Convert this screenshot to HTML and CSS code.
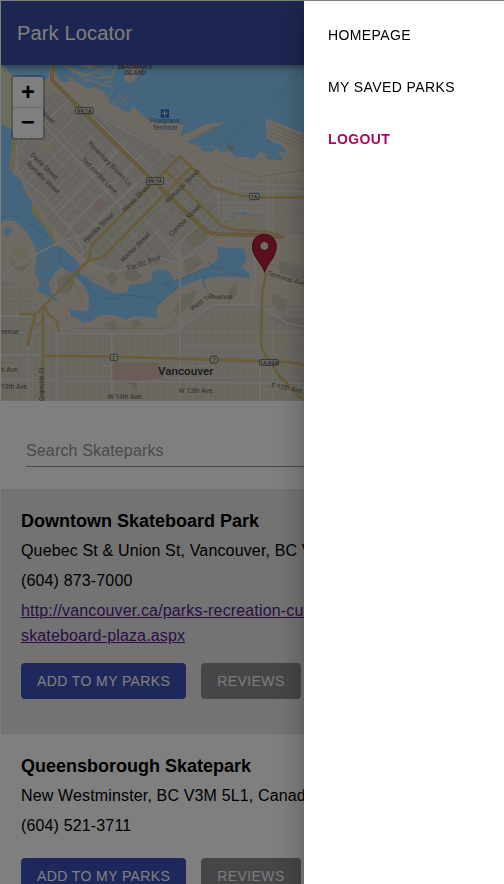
FILE: index.html
```html
<!DOCTYPE html>
<html lang="en">
<head>
<meta charset="utf-8">
<meta name="viewport" content="width=device-width, initial-scale=1">
<title>Park Locator</title>
<link rel="stylesheet" href="styles.css">
</head>
<body>
<div class="app">
  <header class="app-bar"><h1>Park Locator</h1></header>
  <section class="map" aria-label="Map of Vancouver">
    <svg class="map-canvas" viewBox="3 15 1509 1008" preserveAspectRatio="xMinYMin slice">
      <defs>
        <pattern id="blocks" width="48" height="34" patternUnits="userSpaceOnUse">
          <rect width="48" height="34" fill="#d7d1c5"/>
          <path d="M4 4h9v9H4zM17 5h12v7H17zM33 4h11v10H33zM4 20h14v9H4zM22 21h8v9h-8zM34 20h10v8H34z" fill="#d1cbbf"/>
          <path d="M0 0H48M0 0V34" stroke="#dfdbd5" stroke-width="3"/>
          <path d="M0 17H48" stroke="#ccc7bd" stroke-width="1"/>
        </pattern>
        <pattern id="downtown" width="60" height="38" patternUnits="userSpaceOnUse" patternTransform="translate(265 560) rotate(-45)">
          <rect width="60" height="38" fill="#d4cfc4"/>
          <path d="M4 4h12v11H4zM20 4h9v9h-9zM33 5h20v8H33zM4 22h18v11H4zM27 23h10v10H27zM41 22h14v11H41z" fill="#cdc7bc"/>
          <path d="M0 19H60" stroke="#c5c0b8" stroke-width="1"/>
          <path d="M0 0H60M0 0V38" stroke="#dfdcda" stroke-width="3"/>
        </pattern>
      </defs>
      <rect x="3" y="15" width="1509" height="1008" fill="#dcd5c7"/>
      <path d="M3 15L38 48V212L3 192Z" fill="#d9dbc2"/>
      <path d="M150 90L400 215L540 290L640 370L660 470L730 505L850 525L650 530L550 600L350 640L240 590L150 490L55 340L45 280L55 200Z" fill="url(#downtown)"/>
      <path d="M640 340L700 360H912V525H800L690 500L650 450Z" fill="url(#blocks)"/>
      <path d="M3 769H110L175 820H515L540 810L635 736H1512V1023H3Z" fill="url(#blocks)"/>
      <path d="M3 660L90 680L105 720L130 765H3Z" fill="url(#blocks)"/>
      <!-- English Bay and False Creek -->
      <path d="M3 192L20 200L38 212L40 240L35 280L28 325L42 345L60 355L68 375L82 405L95 425L98 460L112 475L135 500L150 530L162 545L166 562L185 562L205 580L225 598L238 615L240 640L262 650L275 668L300 675L320 690L345 700L380 697L390 675L430 670L455 660L455 642L475 628L500 630L515 645L520 665L550 650L600 630L615 626L640 610L652 600V560L735 567L740 600L725 620L748 640L750 655L700 650L650 650L614 658L618 680L624 700L611 680L605 655L560 672L530 690L505 705L485 725L472 740L470 775L430 770L400 768L380 780L345 765L300 765L275 783L250 788L235 775L215 770L205 745L225 750L262 755L268 735L265 700L240 662L215 640L185 620L165 640L145 670L152 695L182 733L155 715L135 705L110 690L120 670L105 640L108 600L112 585L105 560L90 530L70 505L45 485L15 478L3 490Z" fill="#88cbf7"/>
      <path d="M10 510L22 501L40 510L26 527L13 527ZM695 470L706 466L700 477ZM705 462L747 454L738 463Z" fill="#88cbf7"/>
      <!-- Burrard Inlet and Lost Lagoon -->
      <path d="M160 15L165 40L185 65L200 67L215 62L200 45L215 55L260 85L285 82L310 95L330 130L385 160L400 140L445 180L480 190L530 190L552 195L540 230L625 190L675 186L605 225L560 247L590 255L610 275L640 275L650 262L660 275L690 275L705 290L750 292L760 300L780 275L795 280L800 298L850 300L835 275L860 278L850 262L800 235L797 175L912 220L1512 420V15ZM10 15H150L145 55L130 60L38 48Z" fill="#88cbf7"/>
      <path d="M370 15H425L418 38L405 60L385 70L372 60L378 40ZM240 15L275 30L285 15Z" fill="#dcd5c7"/>
      <g fill="none" stroke="#d2d0c5" stroke-width="5">
        <path d="M190 15L240 38L290 55L335 50L350 15M205 28L250 48L330 20M250 55L310 72L340 60M285 20L315 55M300 75L340 78"/>
        <path d="M195 50L260 82M215 47L230 38M235 57L249 46M250 69L266 56M310 95L345 132L370 104M320 119L342 87M336 132L360 99M350 142L382 109M365 152L392 120M602 262H645M670 280L675 255M685 280L690 260" stroke-width="4" stroke-dasharray="9 3"/>
      </g>
      <path d="M685 256L704 263L700 272L682 265Z" fill="#a8aaa6"/>
      <!-- beaches -->
      <path d="M36 235L52 230L47 310L40 334L28 328L35 280ZM95 430L108 433L118 465L135 490L153 505L163 535L166 562L150 530L135 500L112 475L98 460Z" fill="#d6ca92"/>
      <!-- marina docks -->
      <g fill="none" stroke="#b0cbd5" stroke-width="2">
        <path d="M108 590L155 570M106 600L158 580M108 610L162 590M105 620L165 600M107 632L168 610M108 644L165 622M114 656L155 640M115 668L148 653M120 680L149 665M130 692L152 684M150 565V590M140 568V592M460 660L488 688M462 646L493 674M468 637L500 667M478 632L506 660M440 730L468 740M435 738L470 748M438 750L470 758M215 750L232 770M240 755L247 780"/>
      </g>
      <!-- ferry and seawall routes -->
      <path d="M912 15L840 105L770 165L700 230L645 260M3 471Q40 460 76 485T160 540L178 570L180 610L205 640L240 650L275 695L315 715L355 715L365 703L410 708L472 715L475 730L527 687L490 670L550 655L612 625L630 605L634 624L660 620L690 640L735 650" fill="none" stroke="#629ac0" stroke-width="2" stroke-dasharray="5 4"/>
      <!-- parks and special areas -->
      <path d="M38 570L75 555L90 595L55 610ZM120 255L140 243L160 268L138 282ZM375 795L430 790L440 810L370 812ZM635 837H678V858H635ZM823 820H858V850H823ZM697 490Q725 458 758 478V504L700 505Z" fill="#d0d2b2"/>
      <circle cx="590" cy="533" r="30" fill="#c5c5aa"/>
      <path d="M272 430L295 412L322 434L293 458ZM335 908H480L490 955L415 960L410 992L385 970L335 960Z" fill="#d2b9b2"/>
      <g fill="#c9c3b7"><path d="M315 650L342 632L352 662L334 682ZM368 640L405 625L428 648L405 665L380 660ZM170 660L202 640L226 665L205 705L175 692ZM545 705L592 690L580 725L535 765L520 750ZM685 690L710 660V705L685 727ZM820 700L865 722L850 760L812 730ZM798 770L850 795L912 810V775ZM835 600L912 630V665L840 640ZM310 790L345 780L355 808L330 812ZM390 785L410 776L425 793L405 804ZM550 600L590 585L610 610L560 645ZM30 590L55 620L90 610L70 635L38 625Z"/></g>
      <g fill="none" stroke="#c3beb4" stroke-width="3">
        <path d="M810 190L912 235M805 202L912 247M803 214L912 259M805 226L912 271M855 206V238M570 240L650 198M250 635L290 660M660 310L780 350L912 330M800 590L912 622M805 610L912 655M190 100L370 240M56 200L100 155L200 105M500 750L530 790L490 805H230L195 770M190 650L230 680L250 730"/>
      </g>
      <!-- minor roads -->
      <g fill="none" stroke="#e0dddd" stroke-width="5" stroke-linejoin="round">
        <path d="M60 215L50 260V325L70 355L128 405L170 460L220 515L250 575L240 592L200 545M3 650L60 608L180 545L250 525L390 388L450 340M205 120L60 260M165 75L430 335M130 410L205 500M100 160L390 470M170 460L375 250M205 500L430 280M270 165L560 450M310 175L400 225L520 280M240 590L300 630L350 635L430 610L480 595L540 608L655 515"/>
        <path d="M3 769H105M172 822H510L537 808L635 736H780L860 790L912 800M3 885H125M3 960L912 970M172 780V1023M335 822V1023M85 850V1023M540 560V1023M780 850V1023M545 856H780M750 735L765 670V590M540 600L465 515M540 605L525 560L590 500"/>
        <path d="M780 530H912M655 350V470M710 355V425M805 360V525M640 350L710 370L912 378M635 370L700 385M660 430H805M720 395H912M665 485L700 450L805 455" stroke-width="4"/>
      </g>
      <!-- arterial roads -->
      <path class="road-casing" d="M160 15L155 60L225 130L370 275L500 400L620 515L650 522L790 526L850 532"/>
      <g fill="none" stroke="#d2b878" stroke-width="8" stroke-linejoin="round">
        <path d="M160 15L155 60L225 130L370 275L500 400L620 515L650 522L790 526L850 532L800 514L710 510L665 498L495 330M205 660L265 600L275 555L540 288L635 380L725 408L770 412H912M575 320L310 590L265 603L130 740L127 1023M60 765L65 762L105 763L130 740M82 857L105 763M133 740L145 762L172 785L175 815M127 887L340 890L600 898L780 903L870 907L912 916M798 635L793 670L787 695L783 860L800 890L840 950L912 1023"/>
        <path d="M105 765L103 788L113 798L125 785V765" stroke-width="4"/>
      </g>
      <!-- street names -->
      <g class="street-labels">
        <text transform="translate(264 252) rotate(46)">Rosemary Brown Ln.</text>
        <text transform="translate(244 299) rotate(46)">Ted northe Lane</text>
        <text transform="translate(90 286) rotate(44)">Davie Street</text>
        <text transform="translate(78 312) rotate(44)">Burnaby Street</text>
        <text transform="translate(118 156) rotate(43)">Street</text>
        <text transform="translate(258 550) rotate(-45)">Hornby Street</text>
        <text transform="translate(375 456) rotate(-45)">Howe Street</text>
        <text transform="translate(369 608) rotate(-45)">Homer Street</text>
        <text transform="translate(384 632) rotate(-19)">Pacific Blvd</text>
        <text transform="translate(504 431) rotate(-45)">Richards Street</text>
        <text transform="translate(515 530) rotate(-45)">Cambie Street</text>
        <text transform="translate(576 753) rotate(-36)">West 1st</text>
        <text transform="translate(632 718) rotate(-2)">Avenue</text>
        <text transform="translate(801 646) rotate(16)">Terminal Avenue</text>
        <text x="3" y="822">venue</text><text x="3" y="936">h Ave.</text><text x="3" y="986">13th Ave.</text>
        <text x="323" y="1018">W 14th Ave.</text><text x="536" y="999">W 13th Ave.</text>
        <text transform="translate(813 982) rotate(10)">E 12th Ave.</text>
        <text transform="translate(132 1023) rotate(-90)">Granville St</text>
      </g>
      <g class="place-labels"><text x="405" y="26">DEADMAN'S</text><text x="405" y="44">ISLAND</text></g>
      <g class="terminal-label"><text x="494" y="189">Floatplane</text><text x="494" y="210">Terminal</text></g>
      <path d="M482 148H507V173H482Z" fill="#2871c4"/><path d="M494 152V169M486 160H503" stroke="#e8f0f5" stroke-width="3"/>
      <g class="shields">
        <rect x="226" y="143" width="54" height="18" rx="3"/><text x="253" y="159">99;1A</text>
        <rect x="439" y="353" width="52" height="20" rx="3"/><text x="465" y="370">99;1A</text>
        <rect x="748" y="400" width="29" height="19" rx="3"/><text x="762" y="416">7A</text>
        <rect x="331" y="883" width="21" height="19" rx="3"/><text x="341" y="899">7</text>
        <rect x="631" y="889" width="22" height="20" rx="6"/><text x="642" y="906">7</text>
        <rect x="778" y="899" width="57" height="17" rx="3"/><text x="807" y="914">1A;99A</text>
      </g>
      <text class="city-label" x="474" y="945">Vancouver</text>
      <!-- park marker -->
      <path d="M794 640C786 610 756 594 756 558A37 37 0 0 1 830 558C830 594 802 610 794 640Z" fill="#b51e3d"/>
      <path d="M794 635C787 608 758 593 758 558A35 35 0 0 1 828 558C828 593 801 608 794 635Z" fill="none" stroke="#8c1733" stroke-width="3"/>
      <circle cx="793" cy="558" r="13" fill="#dedbd7" stroke="#871331" stroke-width="2"/>
    </svg>
    <div class="zoom-control">
      <button type="button" aria-label="Zoom in">+</button>
      <button type="button" aria-label="Zoom out">−</button>
    </div>
  </section>
  <main>
    <form class="search"><input type="search" aria-label="Search Skateparks" placeholder="Search Skateparks"></form>
    <article class="park park-shaded">
      <h2>Downtown Skateboard Park</h2>
      <p>Quebec St &amp; Union St, Vancouver, BC V6A, Canada</p>
      <p>(604) 873-7000</p>
      <p><a href="#">http://vancouver.ca/parks-recreation-culture/downtown-skateboard-plaza.aspx</a></p>
      <div class="actions"><button type="button" class="button button-primary">Add to my parks</button><button type="button" class="button button-secondary">Reviews</button></div>
    </article>
    <article class="park">
      <h2>Queensborough Skatepark</h2>
      <p>New Westminster, BC V3M 5L1, Canada</p>
      <p>(604) 521-3711</p>
      <p></p>
      <div class="actions"><button type="button" class="button button-primary">Add to my parks</button><button type="button" class="button button-secondary">Reviews</button></div>
    </article>
  </main>
</div>
<div class="backdrop"></div>
<nav class="drawer" aria-label="Main menu">
  <a href="#">Homepage</a>
  <a href="#">My saved parks</a>
  <button type="button">Logout</button>
</nav>
</body>
</html>
```
FILE: styles.css
```css
* { box-sizing: border-box; }

body {
  height: 100vh;
  margin: 0;
  overflow: hidden;
  background: #fff;
  color: #000;
  font: 16px/25px "Liberation Sans", Arial, sans-serif;
  letter-spacing: 0.00938em;
}

h1, h2, p { margin: 0; }

button { border: 0; font: inherit; letter-spacing: inherit; cursor: pointer; }

.app {
  height: 100%;
  overflow: hidden;
  border-top: 1px solid #fff;
  border-left: 1px solid #fff;
}

.app-bar {
  position: relative;
  z-index: 1;
  display: flex;
  align-items: center;
  min-height: 64px;
  padding: 0 16px;
  background: #3b4ba3;
  color: #fff;
  box-shadow: 0 2px 4px -1px rgba(0, 0, 0, 0.2), 0 4px 5px rgba(0, 0, 0, 0.14), 0 1px 10px rgba(0, 0, 0, 0.12);
}

.app-bar h1 { font-size: 20px; font-weight: 400; line-height: 32px; }

.map { position: relative; height: 336px; overflow: hidden; }

.map-canvas { display: block; width: 100%; height: 100%; font-family: Roboto, sans-serif; letter-spacing: 0; }

.road-casing { fill: none; stroke: #b9a168; stroke-width: 11; }
.street-labels { fill: #665951; font-size: 20px; }
.place-labels { fill: #5b6872; font-size: 19px; font-style: italic; font-weight: 700; text-anchor: middle; }
.terminal-label { fill: #576b82; font-size: 19px; text-anchor: middle; }
.shields rect { fill: #ddd9d2; stroke: #686760; stroke-width: 3px; }
.shields text { fill: #404040; font-size: 17px; font-weight: 500; text-anchor: middle; }
.city-label { fill: #333; font-size: 35px; font-weight: 500; }

.zoom-control {
  position: absolute;
  top: 10px;
  left: 10px;
  display: flex;
  flex-direction: column;
  border: 2px solid rgba(0, 0, 0, 0.2);
  border-radius: 4px;
  background-clip: padding-box;
}

.zoom-control button {
  width: 30px;
  height: 30px;
  padding: 2px 0 0;
  background: #fff;
  color: #000;
  font: bold 24px/28px "Liberation Mono", monospace;
}

.zoom-control button:first-child { height: 31px; padding-top: 3px; border-bottom: 1px solid #ccc; border-radius: 2px 2px 0 0; }
.zoom-control button:last-child { border-radius: 0 0 2px 2px; }

.search { padding: 33px 25px 22px; }

.search input {
  display: block;
  width: 100%;
  height: 33px;
  padding: 2px 0 0;
  border: 0;
  border-bottom: 1px solid #949494;
  background: none;
  font: inherit;
  letter-spacing: inherit;
}

.search input::placeholder { color: #949494; opacity: 1; }

.park { display: flex; flex-direction: column; gap: 5px; padding: 20px; }
.park-shaded { background: #e6e6e6; }
.park h2 { font-size: 18px; line-height: 24px; letter-spacing: 0; }
.park a { color: #551a8b; }

.actions { display: flex; gap: 15px; margin: 10px 0 15px; }

.button {
  height: 36px;
  padding: 6px 16px;
  border-radius: 4px;
  color: #fff;
  font-size: 14px;
  line-height: 24px;
  letter-spacing: 0.02857em;
  text-transform: uppercase;
}

.button-primary { background: #3f51b5; }
.button-secondary { background: #8c8c92; color: #f5f5f5; }

.backdrop { position: fixed; inset: 0; z-index: 2; background: rgba(0, 0, 0, 0.5); }

.drawer {
  position: fixed;
  top: 0;
  right: 0;
  bottom: 0;
  z-index: 3;
  display: flex;
  flex-direction: column;
  align-items: flex-start;
  gap: 16px;
  width: 200px;
  padding: 16px;
  border-top: 1px solid #808080;
  background: #fff;
  box-shadow: 0 8px 10px -5px rgba(0, 0, 0, 0.2), 0 16px 24px 2px rgba(0, 0, 0, 0.14), 0 6px 30px 5px rgba(0, 0, 0, 0.12);
}

.drawer a, .drawer button {
  padding: 6px 8px;
  background: none;
  color: #000;
  font-size: 14px;
  line-height: 24px;
  letter-spacing: 0.02857em;
  text-decoration: none;
  text-transform: uppercase;
}

.drawer button { color: #ab0a5c; font-weight: 700; }
```
